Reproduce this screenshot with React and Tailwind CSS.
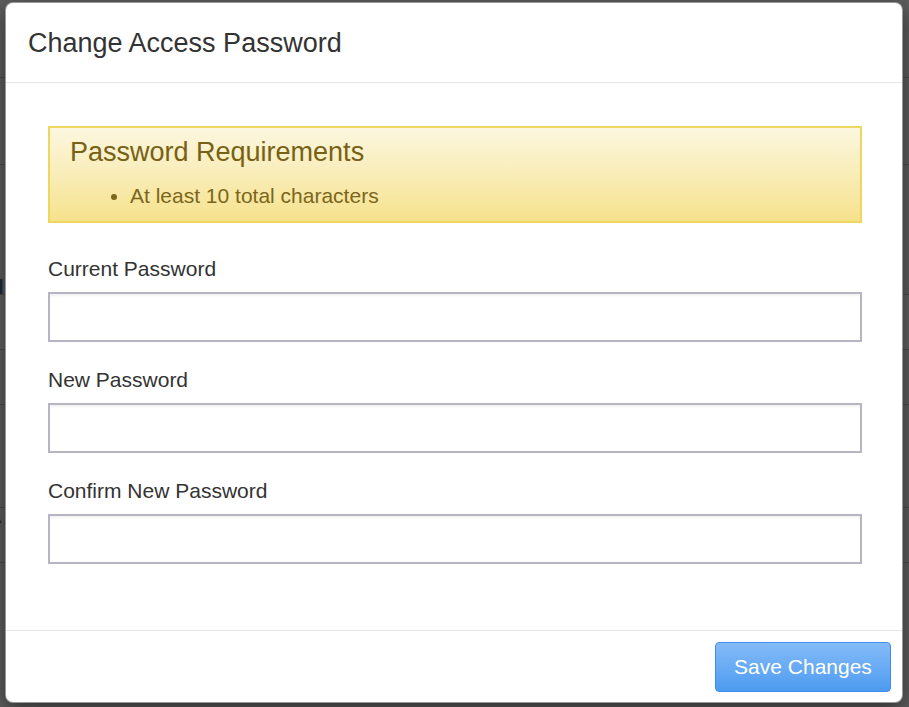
import { useState } from "react"

const font = { fontFamily: '"Liberation Sans", Arial, Helvetica, sans-serif' }

function Field({ label, value, onChange, first = false }) {
  return (
    <div className={first ? "mt-[31px]" : "mt-[23px]"}>
      <label className="block text-[21px] leading-[30px] text-[#333333]">{label}</label>
      <input
        type="password"
        value={value}
        onChange={(event) => onChange(event.target.value)}
        className="mt-[8px] block h-[50px] w-full border-2 border-[#b7b5c3] bg-white px-3 text-[21px] text-[#555] shadow-[inset_0_2px_2px_rgba(0,0,0,0.05)] outline-none"
      />
    </div>
  )
}

export default function App() {
  const [values, setValues] = useState({ current: "", next: "", confirm: "" })

  return (
    <div className="relative h-[707px] w-[909px] overflow-hidden bg-[#5e5e5e]" style={font}>
      {/* page behind the backdrop */}
      <div className="flex flex-col">
        <div className="h-[78px] border-b border-[#4c4c4c]" />
        <div className="h-[87px] border-b border-[#4c4c4c]" />
        <div className="flex h-[130px] items-end border-b border-[#4c4c4c]">
          <span className="-ml-[9px] text-[21px] font-bold leading-[14px] text-[#1d2b3f]">d</span>
        </div>
        <div className="h-[55px] border-b border-[#4c4c4c] bg-[#626262]" />
        <div className="h-[55px] border-b border-[#4c4c4c]" />
        <div className="h-[103px] border-b border-[#4c4c4c]" />
        <div className="flex h-[55px] items-start border-b border-[#4c4c4c]">
          <span className="-ml-[10px] text-[17px] leading-[20px] text-[#222]">A</span>
        </div>
        <div className="flex-1" />
      </div>

      {/* modal */}
      <div className="absolute left-[5px] top-[2px] flex h-[701px] w-[898px] flex-col rounded-[8px] border border-black/40 bg-white shadow-[0_6px_20px_rgba(0,0,0,0.5)]">
        <div className="flex h-[80px] items-center border-b border-[#e5e5e5] px-[22px]">
          <h4 className="text-[27px] leading-[30px] text-[#333333]">Change Access Password</h4>
        </div>

        <div className="flex-1 pl-[42px] pr-[40px] pt-[43px]">
          <div className="h-[97px] border-2 border-[#eed75f] bg-gradient-to-b from-[#fcf7e0] to-[#f6e28c] px-[20px] pt-[9px]">
            <h4 className="text-[27px] leading-[30px] text-[#776115]">Password Requirements</h4>
            <ul className="mt-[14px] list-disc pl-[60px] text-[21px] leading-[30px] text-[#7b661c]">
              <li>At least 10 total characters</li>
            </ul>
          </div>

          <Field
            first
            label="Current Password"
            value={values.current}
            onChange={(v) => setValues((prev) => ({ ...prev, current: v }))}
          />
          <Field
            label="New Password"
            value={values.next}
            onChange={(v) => setValues((prev) => ({ ...prev, next: v }))}
          />
          <Field
            label="Confirm New Password"
            value={values.confirm}
            onChange={(v) => setValues((prev) => ({ ...prev, confirm: v }))}
          />
        </div>

        <div className="flex h-[72px] items-center justify-end border-t border-[#e5e5e5] px-[11px]">
          <button
            type="button"
            className="h-[50px] w-[176px] rounded-[4px] border border-[#3f8eea] bg-gradient-to-b from-[#84bbf8] to-[#4c9bf0] text-[21px] text-white"
          >
            Save Changes
          </button>
        </div>
      </div>
    </div>
  )
}
